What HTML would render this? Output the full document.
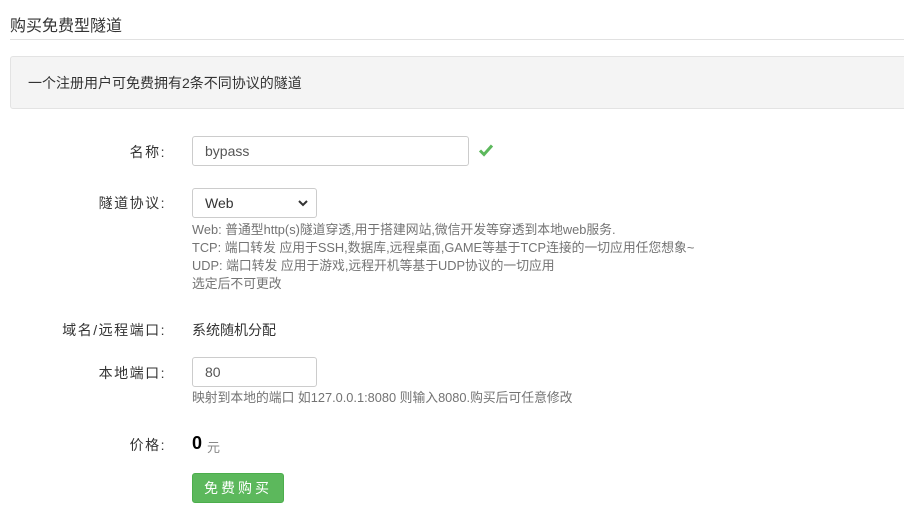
<!DOCTYPE html>
<html><head><meta charset="utf-8"><style>
body{margin:0;width:904px;height:510px;overflow:hidden;background:#fff;font-family:"Liberation Sans","Noto Sans CJK SC",sans-serif;color:#333;font-size:14px;position:relative}
.a{position:absolute;white-space:nowrap}
.lbl{position:absolute;right:738px;white-space:nowrap;color:#333;font-size:14px;letter-spacing:1.5px}
.inp{position:absolute;border:1px solid #ccc;border-radius:3px;box-sizing:border-box;background:#fff;padding-left:12px;font-size:14px;color:#555}
.help{color:#737373;font-size:12.8px;line-height:18px}
</style></head><body>
<div class="a" style="left:10px;top:12px;font-size:16px;color:#333">购买免费型隧道</div>
<div class="a" style="left:10px;top:39px;width:894px;height:1px;background:#e1e1e1"></div>
<div class="a" style="left:10px;top:56px;width:900px;height:53px;background:#f4f4f4;border:1px solid #e3e3e3;border-radius:3px;box-sizing:border-box"></div>
<div class="a" style="left:28px;top:73px;font-size:14px">一个注册用户可免费拥有2条不同协议的隧道</div>

<div class="lbl" style="top:142px">名称:</div>
<div class="inp" style="left:192px;top:136px;width:277px;height:30px;line-height:28px">bypass</div>
<svg class="a" style="left:478px;top:143px" width="16" height="14" viewBox="0 0 16 14"><path d="M2 7.5l4 4 8-9" stroke="#5cb85c" stroke-width="3" fill="none"/></svg>

<div class="lbl" style="top:193px">隧道协议:</div>
<div class="inp" style="left:192px;top:188px;width:125px;height:30px;line-height:28px;color:#333">Web
<svg style="position:absolute;right:8px;top:11px" width="10" height="7" viewBox="0 0 10 7"><path d="M1 1l4 4 4-4" stroke="#333" stroke-width="2" fill="none"/></svg></div>
<div class="a help" style="left:192px;top:221px">Web: 普通型http(s)隧道穿透,用于搭建网站,微信开发等穿透到本地web服务.<br>TCP: 端口转发 应用于SSH,数据库,远程桌面,GAME等基于TCP连接的一切应用任您想象~<br>UDP: 端口转发 应用于游戏,远程开机等基于UDP协议的一切应用<br>选定后不可更改</div>

<div class="lbl" style="top:320px">域名/远程端口:</div>
<div class="a" style="left:192px;top:320px">系统随机分配</div>

<div class="lbl" style="top:363px">本地端口:</div>
<div class="inp" style="left:192px;top:357px;width:125px;height:30px;line-height:28px">80</div>
<div class="a help" style="left:192px;top:389px">映射到本地的端口 如127.0.0.1:8080 则输入8080.购买后可任意修改</div>

<div class="lbl" style="top:435px">价格:</div>
<div class="a" style="left:192px;top:433px;font-size:18px;font-weight:bold;color:#000">0</div>
<div class="a" style="left:207px;top:437px;color:#888;font-size:13px">元</div>

<div class="a" style="left:192px;top:473px;width:92px;height:30px;background:#5cb85c;border:1px solid #4cae4c;border-radius:3px;box-sizing:border-box;color:#fff;text-align:center;line-height:28px;letter-spacing:3px;font-size:14px">免费购买</div>
</body></html>
